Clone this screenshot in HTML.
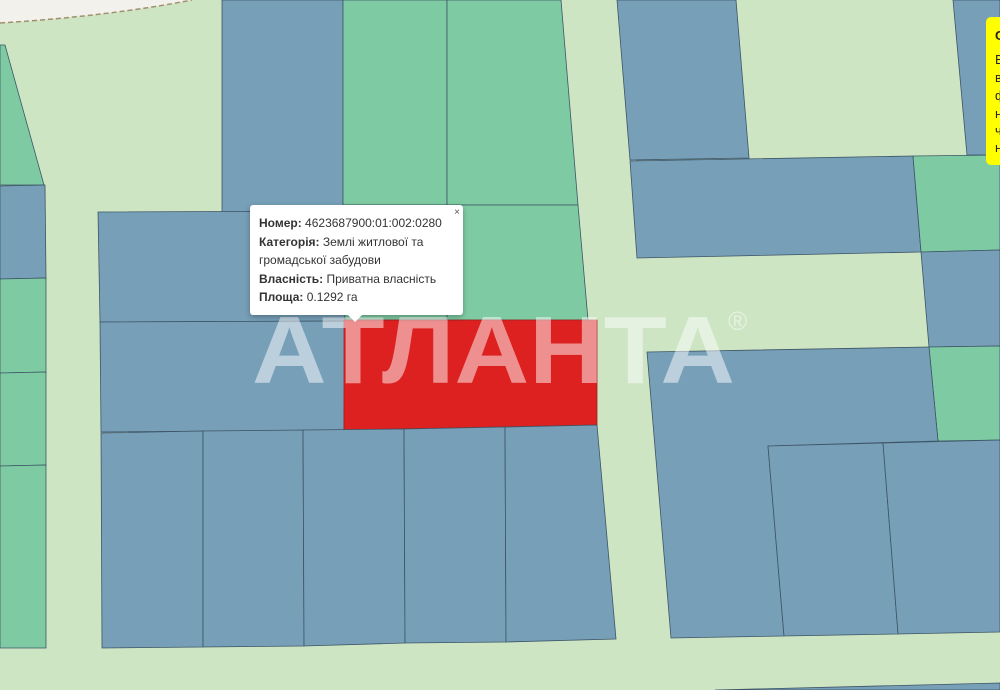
<!DOCTYPE html>
<html><head><meta charset="utf-8">
<style>
html,body{margin:0;padding:0;width:1000px;height:690px;overflow:hidden;background:#cde5c3;}
.pop{position:absolute;left:250px;top:205px;width:213px;height:110px;background:#fff;border-radius:3px;box-shadow:0 2px 6px rgba(0,0,0,.3);font-family:"Liberation Sans",sans-serif;font-size:12px;color:#333;}
.pop .c{position:absolute;left:9px;top:9px;line-height:18.5px;white-space:nowrap;}
.pop b{color:#333}
.x{position:absolute;right:3px;top:2px;font-size:10px;color:#555;}
.tip{position:absolute;left:347px;top:314px;width:0;height:0;border-left:8px solid transparent;border-right:8px solid transparent;border-top:8px solid #fff;}
.yb{position:absolute;left:986px;top:17px;width:30px;height:148px;background:#ffff00;border-radius:5px;font-family:"Liberation Sans",sans-serif;font-size:13px;color:#222;}
.yb div{position:absolute;left:9px;}
</style></head><body>
<svg width="1000" height="690" style="position:absolute;left:0;top:0">
<g stroke="#3d5566" stroke-width="0.8">
<path d="M0,0 L192,0 Q110,16 0,23 Z" fill="#f3f1ec" stroke="none"/>
<path d="M0,23 Q110,16 192,0" fill="none" stroke="#a09070" stroke-dasharray="5,3" stroke-width="1.5"/>
<polygon points="0,45 5,45 44,185 0,185" fill="#7ecba3"/>
<polygon points="0,186 45,185 46,278 0,279" fill="#779fb8"/>
<polygon points="0,279 46,278 46,372 0,373" fill="#7ecba3"/>
<polygon points="0,373 46,372 46,465 0,466" fill="#7ecba3"/>
<polygon points="0,466 46,465 46,648 0,648" fill="#7ecba3"/>
<polygon points="222,0 343,0 343,212 222,212" fill="#779fb8"/>
<polygon points="343,0 447,0 447,205 343,205" fill="#7ecba3"/>
<polygon points="447,0 561,0 578,205 447,205" fill="#7ecba3"/>
<polygon points="447,205 578,205 588,320 447,320" fill="#7ecba3"/>
<polygon points="343,205 447,205 447,320 343,320" fill="#7ecba3"/>
<polygon points="98,212 343,211 345,321 100,322" fill="#779fb8"/>
<polygon points="100,322 345,321 344,430 101,432" fill="#779fb8"/>
<polygon points="344,320 597,320 597,425 344,430" fill="#dd2020" stroke="#a02020"/>
<polygon points="101,433 203,431 203,647 102,648" fill="#779fb8"/>
<polygon points="203,431 303,430 304,646 203,647" fill="#779fb8"/>
<polygon points="303,430 404,429 405,643 304,646" fill="#779fb8"/>
<polygon points="404,429 505,427 506,642 405,643" fill="#779fb8"/>
<polygon points="505,427 597,425 616,639 506,642" fill="#779fb8"/>
<polygon points="617,0 736,0 749,158 630,160" fill="#779fb8"/>
<polygon points="953,0 1000,0 1000,155 967,155" fill="#779fb8"/>
<polygon points="630,161 913,156 921,252 637,258" fill="#779fb8"/>
<polygon points="913,156 1000,155 1000,250 921,252" fill="#7ecba3"/>
<polygon points="921,252 1000,250 1000,346 929,347" fill="#779fb8"/>
<polygon points="929,347 1000,346 1000,440 938,441" fill="#7ecba3"/>
<polygon points="647,352 929,347 938,441 768,446 784,636 671,638" fill="#779fb8"/>
<polygon points="768,446 883,443 898,634 784,636" fill="#779fb8"/>
<polygon points="883,443 1000,440 1000,632 898,634" fill="#779fb8"/>
<polygon points="715,690 1000,683 1000,690" fill="#779fb8"/>
</g>
<text x="252" y="383" font-family="Liberation Sans,sans-serif" font-weight="bold" font-size="96" fill="#fff" fill-opacity="0.5" textLength="483" lengthAdjust="spacingAndGlyphs">АТЛАНТА</text>
<text x="728" y="330" font-family="Liberation Sans,sans-serif" font-size="26" fill="#fff" fill-opacity="0.5">®</text>
</svg>
<div class="pop"><span class="x">×</span><div class="c">
<b>Номер:</b> 4623687900:01:002:0280<br>
<b>Категорія:</b> Землі житлової та<br>громадської забудови<br>
<b>Власність:</b> Приватна власність<br>
<b>Площа:</b> 0.1292 га</div></div>
<div class="tip"></div>
<div class="yb">
<div style="top:11px;font-weight:bold">С</div>
<div style="top:35px">В</div>
<div style="top:53px">в</div>
<div style="top:71px">ф</div>
<div style="top:89px">н</div>
<div style="top:106px">ч</div>
<div style="top:123px">н</div>
</div>
</body></html>
